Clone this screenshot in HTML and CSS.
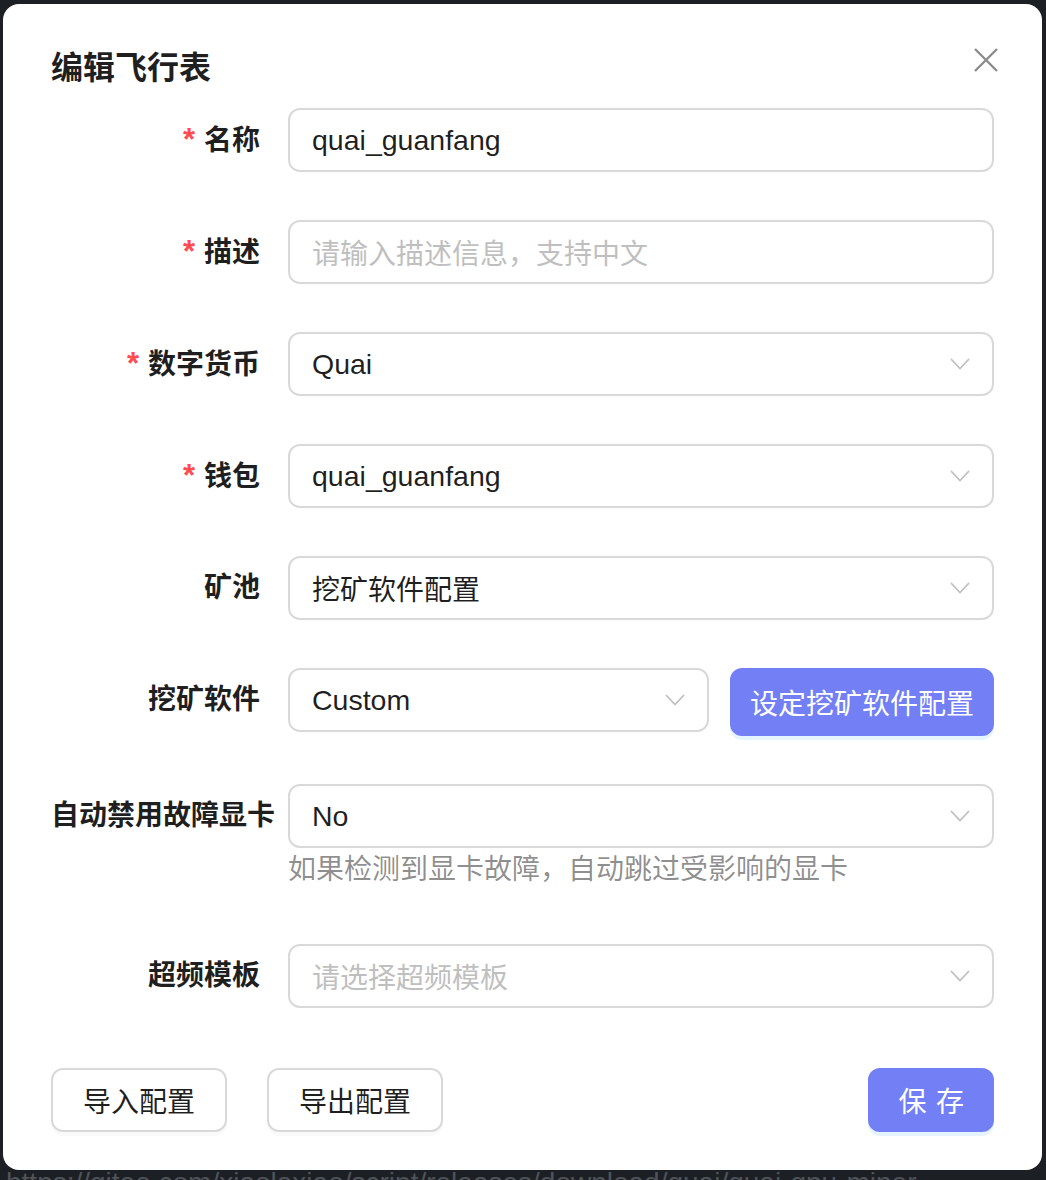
FILE: index.html
```html
<!DOCTYPE html>
<html lang="zh-CN">
<head>
<meta charset="utf-8">
<title>编辑飞行表</title>
<link rel="stylesheet" href="styles.css">
</head>
<body>
<div class="page">
  <div class="bg-url">https://gitee.com/xiaolaxiao/script/releases/download/quai/quai-gpu-miner</div>
</div>
<div class="modal">
  <button class="close" type="button" aria-label="关闭">
    <svg width="24" height="24" viewBox="0 0 24 24"><path d="M1 1L23 23M23 1L1 23" stroke="#8c8c8c" stroke-width="2.4" fill="none"/></svg>
  </button>
  <div class="modal-title">编辑飞行表</div>
  <form class="form">
    <div class="row">
      <label class="label"><span class="req">*</span>名称</label>
      <div class="control"><div class="input"><span class="en">quai_guanfang</span></div></div>
    </div>
    <div class="row">
      <label class="label"><span class="req">*</span>描述</label>
      <div class="control"><div class="input placeholder">请输入描述信息，支持中文</div></div>
    </div>
    <div class="row">
      <label class="label"><span class="req">*</span>数字货币</label>
      <div class="control"><div class="input select"><span class="en">Quai</span><svg class="arrow" width="20" height="12" viewBox="0 0 20 12"><polyline points="1,1 10,10.5 19,1" fill="none" stroke="#bfbfbf" stroke-width="1.8"/></svg></div></div>
    </div>
    <div class="row">
      <label class="label"><span class="req">*</span>钱包</label>
      <div class="control"><div class="input select"><span class="en">quai_guanfang</span><svg class="arrow" width="20" height="12" viewBox="0 0 20 12"><polyline points="1,1 10,10.5 19,1" fill="none" stroke="#bfbfbf" stroke-width="1.8"/></svg></div></div>
    </div>
    <div class="row">
      <label class="label">矿池</label>
      <div class="control"><div class="input select"><span>挖矿软件配置</span><svg class="arrow" width="20" height="12" viewBox="0 0 20 12"><polyline points="1,1 10,10.5 19,1" fill="none" stroke="#bfbfbf" stroke-width="1.8"/></svg></div></div>
    </div>
    <div class="row">
      <label class="label">挖矿软件</label>
      <div class="control control-inline">
        <div class="input select grow"><span class="en">Custom</span><svg class="arrow" width="20" height="12" viewBox="0 0 20 12"><polyline points="1,1 10,10.5 19,1" fill="none" stroke="#bfbfbf" stroke-width="1.8"/></svg></div>
        <button class="btn btn-primary btn-config" type="button">设定挖矿软件配置</button>
      </div>
    </div>
    <div class="row row-help">
      <label class="label">自动禁用故障显卡</label>
      <div class="control">
        <div class="input select"><span class="en">No</span><svg class="arrow" width="20" height="12" viewBox="0 0 20 12"><polyline points="1,1 10,10.5 19,1" fill="none" stroke="#bfbfbf" stroke-width="1.8"/></svg></div>
        <div class="help">如果检测到显卡故障，自动跳过受影响的显卡</div>
      </div>
    </div>
    <div class="row row-last">
      <label class="label">超频模板</label>
      <div class="control"><div class="input select placeholder"><span>请选择超频模板</span><svg class="arrow" width="20" height="12" viewBox="0 0 20 12"><polyline points="1,1 10,10.5 19,1" fill="none" stroke="#bfbfbf" stroke-width="1.8"/></svg></div></div>
    </div>
  </form>
  <div class="footer">
    <div class="footer-left">
      <button class="btn" type="button">导入配置</button>
      <button class="btn" type="button">导出配置</button>
    </div>
    <button class="btn btn-primary btn-save" type="button"><span>保存</span></button>
  </div>
</div>
</body>
</html>
```
FILE: styles.css
```css
* { box-sizing: border-box; }
html, body {
  margin: 0;
  padding: 0;
  background: #1c1f23;
  font-family: "Liberation Sans", "Noto Sans CJK SC", sans-serif;
}
.page {
  height: 1180px;
  overflow: hidden;
  display: flex;
  flex-direction: column;
  justify-content: flex-end;
}
.bg-url {
  font-size: 28px;
  line-height: 34px;
  color: #4f545b;
  padding-left: 6px;
  margin-bottom: -20px;
  white-space: nowrap;
}
.modal {
  position: fixed;
  top: 4px;
  left: 3px;
  width: 1039px;
  background: #fff;
  border-radius: 16px;
  padding: 40px 48px 38px;
}
.close {
  position: absolute;
  top: 34px;
  right: 34px;
  width: 44px;
  height: 44px;
  border: 0;
  background: transparent;
  padding: 0;
  display: flex;
  align-items: center;
  justify-content: center;
}
.modal-title {
  font-size: 32px;
  line-height: 48px;
  font-weight: 700;
  color: rgba(0,0,0,0.88);
  margin-bottom: 16px;
}
.form { margin: 0; }
.row {
  display: flex;
  margin-bottom: 48px;
}
.row-help { margin-bottom: 52px; }
.row-last { margin-bottom: 60px; }
.label {
  width: 237px;
  flex: none;
  height: 64px;
  line-height: 64px;
  text-align: right;
  white-space: nowrap;
  padding-right: 28px;
  font-size: 28px;
  font-weight: 700;
  color: rgba(0,0,0,0.88);
}
.req {
  color: #ff4d4f;
  font-size: 31px;
  font-weight: 700;
  margin-right: 9px;
}
.control {
  flex: 1;
  min-width: 0;
}
.control-inline {
  display: flex;
  gap: 21px;
  align-items: flex-start;
}
.grow { flex: 1; }
.input {
  height: 64px;
  border: 2px solid #d9d9d9;
  border-radius: 12px;
  padding: 0 22px;
  display: flex;
  align-items: center;
  font-size: 28px;
  color: rgba(0,0,0,0.88);
  white-space: nowrap;
}
.en { font-size: 28.5px; }
.select {
  justify-content: space-between;
  padding-right: 22px;
}
.placeholder { color: #bfbfbf; }
.arrow { flex: none; }
.help {
  font-size: 28px;
  line-height: 44px;
  color: rgba(0,0,0,0.45);
}
.btn {
  height: 64px;
  padding: 0 30px;
  border: 2px solid #d9d9d9;
  border-radius: 12px;
  background: #fff;
  font-family: inherit;
  font-size: 28px;
  color: rgba(0,0,0,0.88);
  box-shadow: 0 4px 0 rgba(0,0,0,0.02);
  white-space: nowrap;
  cursor: pointer;
}
.btn-primary {
  background: #737ff5;
  border-color: #737ff5;
  color: #fff;
  box-shadow: 0 4px 0 rgba(5,145,255,0.1);
}
.btn-config {
  height: 68px;
  padding: 0 18px;
  flex: none;
}
.btn-save { padding: 0 28px; }
.btn-save span {
  letter-spacing: 0.34em;
  margin-right: -0.34em;
}
.footer {
  display: flex;
  justify-content: space-between;
  align-items: center;
}
.footer-left {
  display: flex;
  gap: 40px;
}
```
